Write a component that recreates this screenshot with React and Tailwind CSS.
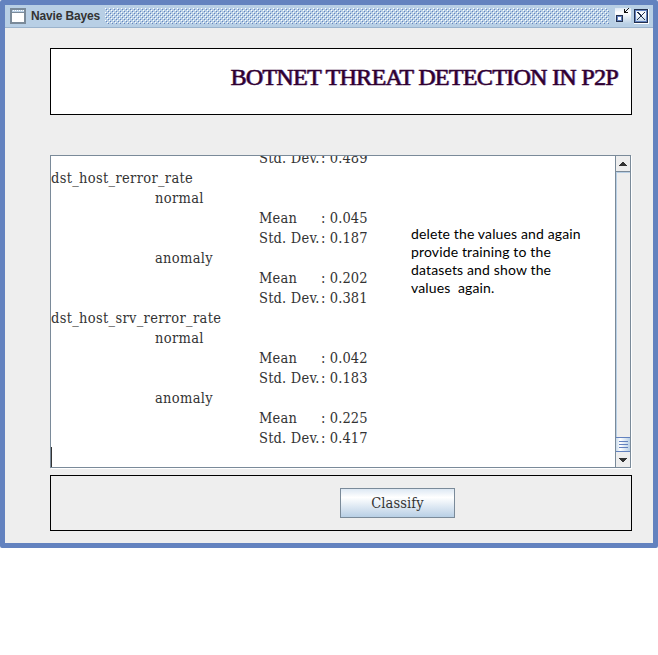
import React from "react";

const rows = [
  { level: 2, label: "Std. Dev.", value: "0.489" },
  { level: 0, label: "dst_host_rerror_rate" },
  { level: 1, label: "normal" },
  { level: 2, label: "Mean", value: "0.045" },
  { level: 2, label: "Std. Dev.", value: "0.187" },
  { level: 1, label: "anomaly" },
  { level: 2, label: "Mean", value: "0.202" },
  { level: 2, label: "Std. Dev.", value: "0.381" },
  { level: 0, label: "dst_host_srv_rerror_rate" },
  { level: 1, label: "normal" },
  { level: 2, label: "Mean", value: "0.042" },
  { level: 2, label: "Std. Dev.", value: "0.183" },
  { level: 1, label: "anomaly" },
  { level: 2, label: "Mean", value: "0.225" },
  { level: 2, label: "Std. Dev.", value: "0.417" },
];

const indents = ["pl-0", "pl-[104px]", "pl-[208px]"];
const serif = "font-['DejaVu_Serif_Condensed','DejaVu_Serif',serif] [font-stretch:condensed] text-[14.5px] text-[#333]";

function Row({ level, label, value }) {
  return (
    <div className={`flex h-5 whitespace-pre ${indents[level]}`}>
      {value ? (
        <>
          <span className="w-[62px] tracking-[0.2px]">{label}</span>
          <span className="tracking-[0.1px]">: {value}</span>
        </>
      ) : (
        <span>{label}</span>
      )}
    </div>
  );
}

function TitleBar() {
  return (
    <div className="flex h-[23px] items-center border-b border-[#9bb3cc] bg-[#b8cfe5]">
      <svg className="ml-[5px] shrink-0" width="16" height="16" shapeRendering="crispEdges">
        <rect x="1" y="1" width="14" height="14" fill="#fff" stroke="#7a8a99" strokeWidth="2" />
        <rect x="2" y="2" width="12" height="2" fill="#b8cfe5" />
        <path d="M3 2.5h1m1 0h1m1 0h1m1 0h1m1 0h1m1 0h1" stroke="#fff" />
        <path d="M2 4.5h12" stroke="#7a8a99" />
      </svg>
      <span className="ml-[5px] w-[74px] shrink-0 font-['Liberation_Sans',Arial,sans-serif] text-[12px] font-bold tracking-[-0.15px] text-[#333]">Navie Bayes</span>
      <svg className="shrink-0" width="504" height="16" shapeRendering="crispEdges">
        <defs>
          <pattern id="bumps" width="4" height="4" patternUnits="userSpaceOnUse">
            <path d="M0 .5h1M2 2.5h1" stroke="#fff" />
            <path d="M1 1.5h1M3 3.5h1" stroke="#6382bf" />
          </pattern>
        </defs>
        <rect width="504" height="16" fill="url(#bumps)" />
      </svg>
      <svg className="ml-[6px] shrink-0" width="16" height="16" shapeRendering="crispEdges">
        <defs>
          <linearGradient id="face" x1="0" y1="0" x2="0" y2="1">
            <stop offset="0" stopColor="#dde8f3" />
            <stop offset=".3" stopColor="#fff" />
            <stop offset="1" stopColor="#b8cfe5" />
          </linearGradient>
        </defs>
        <rect width="16" height="16" fill="url(#face)" />
        <rect x="1" y="7" width="7" height="7" fill="#22304f" />
        <rect x="2" y="8" width="5" height="5" fill="#6382bf" />
        <rect x="3" y="9" width="3" height="3" fill="#fff" />
        <path d="M9 1h1v3h3v1H9zM10 3h1v1h-1zM11 2h1v1h-1zM12 1h1v1h-1zM13 0h1v1h-1z" fill="#111" />
      </svg>
      <svg className="ml-[3px] shrink-0" width="15" height="15" shapeRendering="crispEdges">
        <rect width="15" height="15" fill="#fff" />
        <rect x=".5" y=".5" width="13" height="13" fill="url(#face)" stroke="#22304f" />
        <rect x="1.5" y="1.5" width="11" height="11" fill="none" stroke="#6382bf" />
        <path d="M3 3h2v1h1v1h1v1h1V5h1V4h1V3h1v1h-1v1H9v1H8v2h1v1h1v1h1v1h-1v-1H9V9H8V8H6v1H5v1H4v1H3v-1h1V9h1V8h1V6H5V5H4V4H3z" fill="#22304f" />
      </svg>
    </div>
  );
}

function ScrollBar() {
  return (
    <div className="flex w-4 shrink-0 flex-col border-x border-[#7a8a99] bg-[#eee]">
      <div className="flex h-4 items-center justify-center border-b border-[#7a8a99]">
        <svg width="8" height="4" shapeRendering="crispEdges">
          <path d="M3 0h2v1h1v1h1v1h1v1H0V3h1V2h1V1h1z" fill="#333" />
        </svg>
      </div>
      <div className="flex-1 border-l border-t border-[#b8cfe5]" />
      <div className="flex h-[15px] flex-col items-center justify-center gap-[2px] border-y border-[#6382bf] bg-linear-to-r from-[#c8daeb] via-white via-30% to-[#b8cfe5]">
        <div className="h-px w-[9px] bg-[#6382bf]" />
        <div className="h-px w-[9px] bg-[#6382bf]" />
        <div className="h-px w-[9px] bg-[#6382bf]" />
      </div>
      <div className="flex h-[15px] items-center justify-center">
        <svg width="8" height="4" shapeRendering="crispEdges">
          <path d="M0 0h8v1H7v1H6v1H5v1H3V3H2V2H1V1H0z" fill="#333" />
        </svg>
      </div>
    </div>
  );
}

export default function App() {
  return (
    <div className="h-[655px] w-[658px] overflow-hidden bg-white">
      <div className="h-[548px] w-[658px] rounded-[2px] border-[5px] border-[#6382bf] bg-[#eee]">
        <TitleBar />
        <main className="pl-[45px] pt-5">
          <header className="flex h-[67px] w-[582px] justify-end border border-black bg-white pr-[13px] pt-[12px]">
            <h1 className="whitespace-nowrap font-['Liberation_Serif',serif] text-[24px] leading-[32px] tracking-[-0.68px] text-[#300030] [-webkit-text-stroke:0.5px_#300030] [text-shadow:1px_0_#b0a0d8]">
              BOTNET THREAT DETECTION IN P2P
            </h1>
          </header>
          <section className="mt-10 flex h-[313px] w-[581px] border border-r-0 border-[#7a8a99] bg-white shadow-[1px_1px_0_white]">
            <div className={`relative min-w-0 flex-1 overflow-hidden leading-5 tracking-[0.33px] ${serif}`}>
              <div className="-mt-2">
                {rows.map((row, i) => <Row key={i} {...row} />)}
              </div>
              <div className="absolute bottom-0 left-0 h-5 w-px bg-[#333]" />
              <p className="absolute left-[360px] top-[69px] whitespace-pre font-['Lato',sans-serif] text-[14px] leading-[18px] tracking-[0.14px] text-black">
                {"delete the values and again\nprovide training to the\ndatasets and show the\nvalues  again."}
              </p>
            </div>
            <ScrollBar />
          </section>
          <footer className="mt-[7px] flex h-14 w-[582px] border border-black pl-[289px] pt-3">
            <button className={`h-[30px] w-[115px] border border-[#7a8a99] bg-linear-to-b from-[#dde8f3] via-white via-30% to-[#b8cfe5] pt-0.5 tracking-[0.1px] ${serif}`}>
              Classify
            </button>
          </footer>
        </main>
      </div>
    </div>
  );
}
